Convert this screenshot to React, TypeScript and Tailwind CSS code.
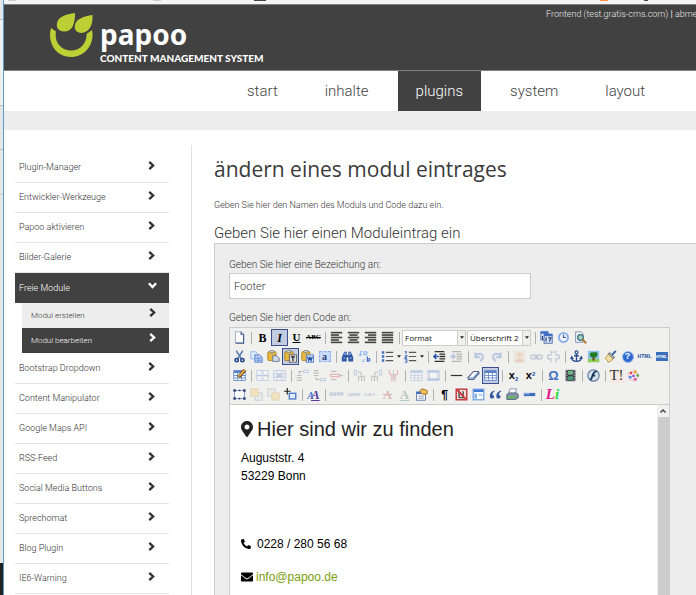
import React from "react";
import type { ReactNode } from "react";
import { FaEnvelope, FaMapMarkerAlt, FaPhoneAlt } from "react-icons/fa";

function Svg({ children }: { children: ReactNode }) {
  return (
    <svg viewBox="0 0 16 16" className="size-[13px] shrink-0" fill="none" aria-hidden="true">
      {children}
    </svg>
  );
}

const blue = "#3f6fc4";
const serif = "font-['Liberation_Serif',serif]";

const pasteBoard = (
  <>
    <rect x="1" y="2" width="10" height="11" rx="1" fill="#e9b93c" stroke="#a57a1c" />
    <rect x="3.500" y="0.500" width="5" height="3" rx="1" fill="#d8d8d8" stroke="#777" />
  </>
);

const lines = (xs: number[][]) =>
  xs.map(([x1, x2, y]) => <path key={y} d={`M${x1} ${y}H${x2}`} stroke="#444" strokeWidth="2" />);

const tableGrid = (
  <>
    <rect x="1" y="2" width="14" height="12" fill="#fff" stroke="#5b82c4" />
    <path d="M1 3.500H15" stroke="#5b82c4" strokeWidth="3" />
    <path d="M1 8H15M1 11H15M5.500 3V14M10.500 3V14" stroke="#5b82c4" />
  </>
);

const icons: Record<string, ReactNode> = {
  new: (
    <Svg>
      <path d="M3 1H10L13 4V15H3Z" fill="#fff" stroke="#8a9bb8" />
      <path d="M10 1V4H13V15H3.500" stroke="#4a5f8c" strokeWidth="1.500" />
    </Svg>
  ),
  bold: <span className={`${serif} text-xs font-bold`}>B</span>,
  italic: <span className={`${serif} text-xs font-bold italic`}>I</span>,
  underline: <span className={`${serif} text-[11px] font-bold underline`}>U</span>,
  strike: <span className={`${serif} text-[7px] font-bold line-through`}>ABC</span>,
  left: <Svg>{lines([[1, 15, 2], [1, 11, 5], [1, 15, 8], [1, 11, 11], [1, 15, 14]])}</Svg>,
  center: <Svg>{lines([[1, 15, 2], [3, 13, 5], [1, 15, 8], [3, 13, 11], [1, 15, 14]])}</Svg>,
  right: <Svg>{lines([[1, 15, 2], [5, 15, 5], [1, 15, 8], [5, 15, 11], [1, 15, 14]])}</Svg>,
  justify: <Svg>{lines([[1, 15, 2], [1, 15, 5], [1, 15, 8], [1, 15, 11], [1, 15, 14]])}</Svg>,
  date: (
    <Svg>
      <rect x="1" y="1" width="9" height="10" fill="#e8effc" stroke="#4a6fb4" />
      <rect x="5" y="4" width="10" height="11" fill="#dce8fb" stroke="#33569c" />
      <path d="M1 2H10M5 5H15" stroke="#3f6fc4" strokeWidth="3" />
      <path d="M3 6V11M7.500 8V13M10 8.500H13.500L11.500 13" stroke="#26407c" strokeWidth="1.500" />
    </Svg>
  ),
  time: (
    <Svg>
      <circle cx="8" cy="8" r="5.500" fill="#f4f8ff" stroke="#8fb0e8" strokeWidth="2.500" />
      <path d="M8 4.500V8H11" stroke="#33569c" strokeWidth="1.500" />
    </Svg>
  ),
  preview: (
    <Svg>
      <path d="M2 1H9L11 3V14H2Z" fill="#eef3fb" stroke="#6f86a8" />
      <circle cx="8" cy="8" r="3.500" fill="#9fd3c5" stroke="#3b6c78" strokeWidth="1.500" />
      <path d="M10.500 10.500L15 15" stroke="#b07a2c" strokeWidth="2.500" />
    </Svg>
  ),
  cut: (
    <Svg>
      <path d="M4 1L10.500 11M12 1L5.500 11" stroke="#5f83b4" strokeWidth="2" />
      <circle cx="4.500" cy="12.500" r="2" stroke="#23478e" strokeWidth="2" />
      <circle cx="11.500" cy="12.500" r="2" stroke="#23478e" strokeWidth="2" />
    </Svg>
  ),
  copy: (
    <Svg>
      <path d="M1 2H7L9 4V11H1Z" fill="#dbe8fc" stroke="#8fb0e8" />
      <path d="M6 6H12L15 9V15H6Z" fill="#b9d0f5" stroke="#3f6fc4" />
      <path d="M8 10H13M8 12.500H13" stroke="#3f6fc4" />
    </Svg>
  ),
  paste: (
    <Svg>
      {pasteBoard}
      <path d="M7 7H12L15 10V14H7Z" fill="#cfd8e2" stroke="#5d6f8a" />
    </Svg>
  ),
  pasteText: (
    <Svg>
      {pasteBoard}
      <rect x="6.500" y="6" width="9" height="9" fill="#ddd" stroke="#555" />
      <path d="M8.500 8.500H13.500M11 8.500V13.500" stroke="#222" strokeWidth="1.500" />
    </Svg>
  ),
  pasteWord: (
    <Svg>
      {pasteBoard}
      <rect x="6.500" y="6" width="9" height="9" fill="#eaf1fd" stroke="#3f6fc4" />
      <path d="M8 8L9.500 13L11 9L12.500 13L14 8" stroke="#2450a5" strokeWidth="1.500" />
    </Svg>
  ),
  selectAll: (
    <span className="flex h-[11px] w-3 items-center justify-center border border-dashed border-[#8fb0f0] bg-[#c9daf9] font-['Liberation_Serif',serif] text-[10px] leading-none font-bold text-[#263d74]">
      a
    </span>
  ),
  find: (
    <Svg>
      <path d="M4 2H7V6H9V2H12L15 9V14H9V9H7V14H1V9Z" fill="#2e57a4" />
      <path d="M3 10H5M11 10H13M5 3V6M11 3V6" stroke="#9dbdf0" strokeWidth="1.500" />
    </Svg>
  ),
  replace: (
    <Svg>
      <path d="M6 2H3V7M1 5L3 7.500L5 5M8 14H5M8 11L5 14" stroke="#8fb6f0" strokeWidth="1.200" />
      <circle cx="9" cy="4" r="2" stroke="#8fb6f0" strokeWidth="1.500" />
      <path d="M11.500 8V14M11.500 11C15 9 16 14 11.500 14" stroke="#3f6fc4" strokeWidth="1.500" />
    </Svg>
  ),
  bullets: (
    <Svg>
      <path d="M1 3H4M1 8H4M1 13H4" stroke={blue} strokeWidth="3" />
      <path d="M6 3H15M6 8H15M6 13H15" stroke="#555" strokeWidth="1.500" />
    </Svg>
  ),
  numbers: (
    <Svg>
      <path d="M1 2H2.500V5M1 7H3.500L1 10H4M1 12H3.500V15H1" stroke={blue} strokeWidth="1.300" />
      <path d="M6 3H15M6 8H15M6 13H15" stroke="#555" strokeWidth="1.500" />
    </Svg>
  ),
  outdent: (
    <Svg>
      <path d="M2 2H14M8 5H15M8 8H15M8 11H15M2 14H14" stroke="#333" strokeWidth="1.600" />
      <path d="M7 8H1M4 5L1 8L4 11" stroke="#2e57a4" strokeWidth="2" />
    </Svg>
  ),
  indent: (
    <Svg>
      <path d="M2 2H14M8 5H15M8 8H15M8 11H15M2 14H14" stroke="#333" strokeWidth="1.600" />
      <path d="M0 8H6M3 5L6 8L3 11" stroke="#2e57a4" strokeWidth="2" />
    </Svg>
  ),
  undo: (
    <Svg>
      <path d="M3 3V9H9M3 8C7 2 14 5 12 10L9 14" stroke={blue} strokeWidth="2.500" />
    </Svg>
  ),
  redo: (
    <Svg>
      <path d="M13 3V9H7M13 8C9 2 2 5 4 10L7 14" stroke={blue} strokeWidth="2.500" />
    </Svg>
  ),
  image: (
    <Svg>
      <rect x="1" y="1" width="14" height="14" fill="#efcfae" />
      <circle cx="8" cy="6" r="3" fill="#d79a6c" />
      <path d="M2 15C3 9 13 9 14 15Z" fill="#c98a58" />
    </Svg>
  ),
  link: (
    <Svg>
      <rect x="1" y="6" width="7" height="5" rx="2.500" stroke="#4c6797" strokeWidth="1.500" />
      <rect x="8" y="6" width="7" height="5" rx="2.500" stroke="#4c6797" strokeWidth="1.500" />
      <path d="M5 8.500H11" stroke="#4c6797" strokeWidth="1.500" />
    </Svg>
  ),
  unlink: (
    <Svg>
      <path
        d="M6 6H3C0 6 0 11 3 11H6M10 6H13C16 6 16 11 13 11H10M4 1L6 4M12 1L10 4M4 15L6 12M12 15L10 12M8 1V4"
        stroke="#4c6797"
        strokeWidth="1.500"
      />
    </Svg>
  ),
  anchor: (
    <Svg>
      <circle cx="8" cy="3" r="1.800" stroke="#2b4f8e" strokeWidth="1.500" />
      <path
        d="M8 5V14M5 7H11M2 9C2 13 5 14 8 14C11 14 14 13 14 9M1 11L2 8.500L4 11M12 11L14 8.500L15 11"
        stroke="#2b4f8e"
        strokeWidth="1.700"
      />
    </Svg>
  ),
  tree: (
    <Svg>
      <rect x="1" y="1" width="14" height="14" fill="#8fc3ee" />
      <rect x="1" y="11" width="14" height="4" fill="#8fd050" />
      <path d="M8 8V13" stroke="#6d3f18" strokeWidth="2.500" />
      <path d="M4 8C2 5 5 2 8 3C11 1 15 4 12 8C10 10 6 10 4 8Z" fill="#237c25" />
    </Svg>
  ),
  brush: (
    <Svg>
      <path d="M14.500 1L10 6" stroke="#3d62a6" strokeWidth="2.500" />
      <path d="M7 3L13 9L11 11L5 5Z" fill="#9aa5b5" stroke="#596273" />
      <path d="M5 5L11 11C9 14 7 15 5 15C4 12 2 11 1 10C3 9 4 7 5 5Z" fill="#f1dda6" stroke="#b98d30" />
    </Svg>
  ),
  help: (
    <span className="flex size-3 items-center justify-center rounded-full border border-[#9dbdf0] bg-[#2f6ad0] font-['Liberation_Sans',sans-serif] text-[9px] leading-none font-bold text-white">
      ?
    </span>
  ),
  html: <span className="font-['Liberation_Sans',sans-serif] text-[5px] font-bold text-[#2450a5]">HTML</span>,
  htmlBox: (
    <span className="flex h-[9px] w-3 items-center justify-center bg-[#3a70bb] font-['Liberation_Sans',sans-serif] text-[4px] font-bold text-white">
      HTML
    </span>
  ),
  editTable: (
    <Svg>
      {tableGrid}
      <path d="M14.500 1L7 10" stroke="#7a4d16" strokeWidth="4" />
      <path d="M14.500 1L7.500 9" stroke="#f0b64a" strokeWidth="2" />
    </Svg>
  ),
  rowProps: (
    <Svg>
      <rect x="1" y="2" width="14" height="12" fill="#fff" stroke={blue} />
      <path d="M1 8H15M8 3V6M8 10V13" stroke={blue} strokeWidth="2" />
    </Svg>
  ),
  cellProps: (
    <Svg>
      <rect x="1" y="2" width="14" height="12" fill="#fff" stroke={blue} />
      <path d="M1 6H15M1 10H15M5 2V14M11 2V14" stroke={blue} />
      <rect x="6" y="6" width="4" height="4" fill={blue} />
    </Svg>
  ),
  rowBefore: (
    <Svg>
      <path d="M1 8H7M1 11H7M1 14H7" stroke="#555" strokeWidth="1.500" />
      <path d="M4 6V3H8" stroke="#333" strokeWidth="1.300" />
      <rect x="9.500" y="1.500" width="6" height="3" stroke={blue} />
    </Svg>
  ),
  rowAfter: (
    <Svg>
      <path d="M1 2H7M1 5H7M1 8H7" stroke="#555" strokeWidth="1.500" />
      <path d="M4 10V13H8" stroke="#333" strokeWidth="1.300" />
      <rect x="9.500" y="11.500" width="6" height="3" stroke={blue} />
    </Svg>
  ),
  rowDelete: (
    <Svg>
      <path d="M1 3H8M1 13H8" stroke="#555" strokeWidth="1.500" />
      <path d="M1 6.500H12V9.500H1Z" stroke="#d23b3b" strokeWidth="1.600" />
      <path d="M11 8H16" stroke="#333" />
    </Svg>
  ),
  colBefore: (
    <Svg>
      <path d="M7 9V15M10.500 9V15M14 9V15M7 9H14" stroke="#555" strokeWidth="1.300" />
      <rect x="1.500" y="1.500" width="3" height="6" stroke={blue} />
      <path d="M6 4H10V8" stroke="#333" />
    </Svg>
  ),
  colAfter: (
    <Svg>
      <path d="M2 9V15M5.500 9V15M9 9V15M2 9H9" stroke="#555" strokeWidth="1.300" />
      <rect x="11.500" y="1.500" width="3" height="6" stroke={blue} />
      <path d="M10 4H6V8" stroke="#333" />
    </Svg>
  ),
  colDelete: (
    <Svg>
      <path d="M3 1V6L6 8V15M13 1V6L10 8V15" stroke="#d23b3b" strokeWidth="1.600" />
      <path d="M8 1V13M5 7H11" stroke="#555" />
    </Svg>
  ),
  grid: <Svg>{tableGrid}</Svg>,
  merge: (
    <Svg>
      <rect x="1" y="2" width="14" height="12" fill="#fff" stroke={blue} />
      <path d="M1 3.500H15M1 12.500H15" stroke={blue} strokeWidth="2.500" />
      <path d="M3 5V12M13 5V12" stroke={blue} />
    </Svg>
  ),
  rule: (
    <Svg>
      <path d="M1 8H15" stroke="#333" strokeWidth="1.500" />
    </Svg>
  ),
  eraser: (
    <Svg>
      <path d="M1 11L8 3H14L15 5L8 13H2Z" fill="#fff" stroke="#4c5d86" strokeWidth="1.300" />
      <path d="M2 11H8L14 4" stroke="#4c76c4" strokeWidth="1.300" />
    </Svg>
  ),
  sub: (
    <span className="font-['Liberation_Sans',sans-serif] text-[11px] leading-none font-bold">
      x<sub className="text-[6px] text-[#2450a5]">2</sub>
    </span>
  ),
  sup: (
    <span className="font-['Liberation_Sans',sans-serif] text-[11px] leading-none font-bold">
      x<sup className="text-[6px] text-[#2450a5]">2</sup>
    </span>
  ),
  omega: <span className="font-['Liberation_Sans',sans-serif] text-[13px] font-bold text-[#416fc4]">Ω</span>,
  film: (
    <Svg>
      <rect x="2" y="1" width="12" height="14" fill="#333b42" />
      <rect x="5" y="2" width="6" height="5" fill="#72b789" />
      <rect x="5" y="9" width="6" height="5" fill="#4e9b78" />
      <path d="M3.500 1V15M12.500 1V15" stroke="#fff" strokeDasharray="1.500 1.500" />
    </Svg>
  ),
  flash: (
    <Svg>
      <circle cx="8" cy="8" r="7" fill="#d5dfeb" stroke="#6682a3" strokeWidth="1.500" />
      <path d="M12 3C8 3 7 7 6.500 9C6 11 5 13 3.500 13M6 8H10" stroke="#19375f" strokeWidth="2.200" />
    </Svg>
  ),
  type: (
    <span className="flex h-[14px] w-4 items-center justify-center bg-[#f6e9e4] font-['Liberation_Serif',serif] text-[15px] leading-none text-[#333]">
      T!
    </span>
  ),
  palette: (
    <Svg>
      <path d="M1 5L10 1L15 8L11 15L3 13Z" fill="#f9edf0" stroke="#e0b3ba" />
      <circle cx="5" cy="5" r="1.700" fill="#e5484d" />
      <circle cx="10" cy="4" r="1.700" fill="#f0a22e" />
      <circle cx="13" cy="8" r="1.700" fill="#62b34a" />
      <circle cx="8" cy="8.500" r="1.700" fill="#8d52c7" />
      <circle cx="4" cy="10" r="1.700" fill="#3f8be0" />
      <circle cx="10" cy="12.500" r="1.700" fill="#e04f9d" />
    </Svg>
  ),
  layer: (
    <Svg>
      <rect x="2" y="3" width="12" height="10" fill="#fff" stroke="#6b8fd0" />
      <path
        d="M0.500 1.500H3.500V4.500H0.500ZM12.500 1.500H15.500V4.500H12.500ZM0.500 11.500H3.500V14.500H0.500ZM12.500 11.500H15.500V14.500H12.500ZM7 2H9V4H7ZM7 12H9V14H7Z"
        fill="#2c3f6e"
      />
    </Svg>
  ),
  forward: (
    <Svg>
      <rect x="6" y="6" width="9" height="9" fill="#d6dae0" stroke="#6d7787" />
      <rect x="1" y="1" width="9" height="9" fill="#efc75a" stroke="#b98d30" />
    </Svg>
  ),
  backward: (
    <Svg>
      <rect x="1" y="1" width="9" height="9" fill="#d6dae0" stroke="#6d7787" />
      <rect x="6" y="6" width="9" height="9" fill="#efc75a" stroke="#b98d30" />
    </Svg>
  ),
  absolute: (
    <Svg>
      <path d="M4 0V8M0 4H8" stroke="#222" strokeWidth="1.500" />
      <rect x="6.500" y="6.500" width="8" height="7" fill="#e3edfd" stroke="#3f6fc4" strokeWidth="1.500" />
    </Svg>
  ),
  styles: (
    <span className={`${serif} flex items-baseline leading-none font-bold italic`}>
      <span className="-mr-[3px] text-[10px] text-[#3f7bd4]">A</span>
      <span className="text-[13px] text-[#5b3aa0] underline">A</span>
    </span>
  ),
  cite: <span className={`${serif} text-[7px] font-bold text-[#2450a5]`}>6699</span>,
  abbr: <span className={`${serif} text-[5px] font-bold text-[#2450a5]`}>ABBR</span>,
  acronym: <span className={`${serif} text-[5px] font-bold text-[#2450a5]`}>A.B.C.</span>,
  del: <span className={`${serif} text-[13px] font-bold text-[#b2383c] line-through`}>A</span>,
  ins: <span className={`${serif} text-[13px] font-bold text-[#2f6d4b] underline`}>A</span>,
  attribs: (
    <Svg>
      <rect x="2" y="5" width="11" height="10" fill="#fff" stroke="#4a6aa0" />
      <path d="M2 6H13" stroke="#3f6fc4" strokeWidth="3" />
      <path d="M4 10H11M4 12.500H11" stroke="#7b8aa8" />
      <path d="M6 3L9 1L15 3V7L11 8L7 6Z" fill="#f0bd56" stroke="#9c6b1d" />
    </Svg>
  ),
  pilcrow: <span className="font-['Liberation_Sans',sans-serif] text-xs font-bold">¶</span>,
  nbsp: (
    <Svg>
      <rect x="1.500" y="1.500" width="13" height="13" fill="#f6dfe0" stroke="#c33b3f" strokeWidth="1.800" />
      <path d="M5 12V4L10 11V4M11 12H5" stroke="#333" strokeWidth="1.500" />
      <path d="M2 2L14 14" stroke="#d6383d" strokeWidth="1.800" />
    </Svg>
  ),
  template: (
    <Svg>
      <rect x="1.500" y="1.500" width="13" height="13" fill="#fff" stroke="#6b9be0" strokeWidth="1.500" />
      <path d="M2 3.500H14" stroke="#3f7bd4" strokeWidth="3" />
      <rect x="3" y="7" width="3" height="6" fill="#7daae8" />
      <rect x="8" y="7" width="5" height="3" fill="#bcd5f7" />
    </Svg>
  ),
  quote: (
    <Svg>
      <path
        d="M7 3C3 4 1 6 1 10C1 12 2 13 4 13C7 13 7 9 4.500 9C4 7 5 5 7 4ZM15 3C11 4 9 6 9 10C9 12 10 13 12 13C15 13 15 9 12.500 9C12 7 13 5 15 4Z"
        fill="#33569c"
      />
    </Svg>
  ),
  print: (
    <Svg>
      <path d="M5 1H13L11 7H3Z" fill="#fff" stroke="#6f86a8" />
      <path d="M1 8L4 6H13L15 8V12L12 14H1Z" fill="#8493a8" stroke="#45556e" />
      <path d="M2 11.500H12" stroke="#5ac34b" strokeWidth="2" />
    </Svg>
  ),
  pageBreak: (
    <Svg>
      <rect x="1" y="6" width="14" height="4" fill="#3d6dbd" />
      <path d="M1 7H8" stroke="#8db2ee" strokeWidth="1.500" />
    </Svg>
  ),
  lorem: (
    <span className={`${serif} text-[15px] leading-none font-bold italic`}>
      <span className="text-[#e2148c]">L</span>
      <span className="text-[#28e040]">i</span>
    </span>
  ),
};

// "|" draws a separator, "*" marks a pressed button, "-" a disabled one, "+" adds a menu arrow.
const firstRow = "new | bold *italic underline strike | left center right justify |".split(" ");
const firstRowEnd = "| date time preview".split(" ");
const rows: string[][] = [
  "cut copy paste *pasteText pasteWord selectAll | find replace | +bullets +numbers | outdent -indent | -undo -redo | -image -link -unlink | anchor tree brush help html htmlBox",
  "editTable | -rowProps -cellProps | -rowBefore -rowAfter -rowDelete | -colBefore -colAfter -colDelete | -grid -merge | rule eraser *grid | sub sup | omega film | flash | type palette",
  "layer -forward -backward absolute | styles | -cite -abbr -acronym -del -ins attribs | pilcrow nbsp template quote print pageBreak | lorem",
].map((r) => r.split(" "));

function Tools({ items }: { items: string[] }) {
  return (
    <>
      {items.map((item, i) => {
        if (item === "|") return <span key={i} className="mr-[2px] ml-[3px] h-3 w-px shrink-0 bg-[#b0b0b0]" />;
        const mark = "*-+".includes(item[0]) ? item[0] : "";
        const name = mark ? item.slice(1) : item;
        return (
          <React.Fragment key={i}>
            <button
              type="button"
              aria-label={name}
              disabled={mark === "-"}
              className={`flex h-[17px] w-[17px] shrink-0 items-center justify-center overflow-hidden border leading-none ${
                mark === "*" ? "border-[#3a4f8c] bg-[#c2cbe0]" : "border-transparent"
              } ${mark === "-" ? "opacity-30" : ""}`}
            >
              {icons[name]}
            </button>
            {mark === "+" && (
              <svg viewBox="0 0 6 4" className="mx-px h-[3px] w-1 shrink-0" aria-hidden="true">
                <path d="M0 0H6L3 4Z" fill="#222" />
              </svg>
            )}
          </React.Fragment>
        );
      })}
    </>
  );
}

function ToolSelect({ label }: { label: string }) {
  return (
    <span className="mr-px flex h-4 w-16 shrink-0 border border-[#ccc] bg-white">
      <select
        aria-label={label}
        className="min-w-0 flex-1 appearance-none pl-[2px] font-['Open_Sans',sans-serif] text-[8px] leading-none font-normal text-[#111] outline-none"
      >
        <option>{label}</option>
      </select>
      <span className="flex w-2 items-center justify-center border-l border-[#ccc] bg-[#efefed]">
        <svg viewBox="0 0 6 4" className="h-[3px] w-1" aria-hidden="true">
          <path d="M0 0H6L3 4Z" fill="#222" />
        </svg>
      </span>
    </span>
  );
}

function Chevron({ down = false }: { down?: boolean }) {
  return (
    <svg viewBox="0 0 10 10" className={`mb-[6px] size-[9px] ${down ? "rotate-90" : ""}`} aria-hidden="true">
      <path d="M2.500 1L6.800 5L2.500 9" fill="none" stroke="currentColor" strokeWidth="2.600" />
    </svg>
  );
}

function SideLink({ label }: { label: string }) {
  return (
    <li className="border-b border-[#e4e4e4]">
      <a href="#" className="flex h-[29px] items-center justify-between pt-px pr-[13px] pl-1 text-[#333]">
        {label}
        <Chevron />
      </a>
    </li>
  );
}

const navItems = ["start", "inhalte", "plugins", "system", "layout"];

export default function App() {
  return (
    <div className="flex h-screen overflow-hidden bg-white font-['Roboto',sans-serif] font-light text-[#333]">
      <div className="flex w-[3px] shrink-0 flex-col bg-[#e6e6e6]">
        <div className="h-5 border-b border-[#bbb]" />
        <div className="h-[86px] border-b border-[#bbb] bg-[#f0f0f0]" />
        <div className="h-11 border-b border-[#bbb]" />
        <div className="h-[45px] border-b border-[#ccc]" />
        <div className="flex-1" />
        <div className="h-8 bg-[#222]" />
      </div>
      <div className="flex min-w-0 flex-1 flex-col border-l border-[#5b9bc8]">
        <div className="flex h-1 shrink-0 items-start bg-[#f4f4f4]">
          <span className="ml-1 h-px w-2 bg-[#ccc]" />
          <span className="ml-[137px] h-px w-2 bg-[#ccc]" />
          <span className="ml-[93px] h-px w-3 bg-[#444]" />
          <span className="ml-[334px] h-px w-2 bg-[#ff8a45]" />
          <span className="ml-9 h-px w-1 bg-[#444]" />
        </div>
        <header className="flex h-[67px] shrink-0 justify-between overflow-hidden border-y border-[#808080] bg-[#414141]">
          <a href="#" className="ml-[45px] flex text-white">
            <svg viewBox="0 0 44 46" className="mt-2 h-[46px] w-11 shrink-0" fill="#bccf34" aria-hidden="true">
              <path d="M26 0C26 10 24 18 16 18.500C10 19 7 15 8 10C9 4 17 1 26 0Z" />
              <path d="M43.500 2C44 11 41 19 33 20C27 20 25 16 26 12C27 6 35 3 43.500 2Z" />
              <path d="M2 15L7 18.500C5 29 12 37.500 22 37.500C32 37.500 38 29 37.500 21L43 17C46 31 36 44 22 44C7 44 -2 30 2 15Z" />
            </svg>
            <span className="mt-[15px] ml-[7px] flex flex-col">
              <span className="font-['Noto_Sans',sans-serif] text-[28px] leading-7 font-bold">papoo</span>
              <span className="mt-1 font-['Lato',sans-serif] text-[10px] leading-3 font-black">
                CONTENT MANAGEMENT SYSTEM
              </span>
            </span>
          </a>
          <p className="w-[150px] overflow-hidden pt-[3px] text-[9px] leading-3 whitespace-nowrap text-[#e8e8e8]">
            <a href="#">Frontend (test.gratis-cms.com)</a> <b>|</b> <a href="#">abmelden</a>
          </p>
        </header>
        <nav className="flex h-10 shrink-0 gap-[11px] pl-[225px] text-[15px]">
          {navItems.map((n) => (
            <a
              key={n}
              href="#"
              className={`flex items-center px-[18px] ${n === "plugins" ? "bg-[#414141] text-white" : "text-[#444]"}`}
            >
              {n}
            </a>
          ))}
        </nav>
        <div className="h-[19px] shrink-0 bg-[#ededed]" />
        <div className="flex min-h-0 flex-1 pt-[15px]">
          <aside className="w-[188px] shrink-0 border-r border-[#e0e0e0] pt-2 pr-[22px] pl-[11px] text-[9px]">
            <ul>
              {["Plugin-Manager", "Entwickler-Werkzeuge", "Papoo aktivieren", "Bilder-Galerie"].map((l) => (
                <SideLink key={l} label={l} />
              ))}
              <li className="mb-px">
                <a
                  href="#"
                  className="flex h-[30px] items-center justify-between bg-[#414141] pt-px pr-3 pl-1 text-white"
                >
                  Freie Module
                  <Chevron down />
                </a>
                <ul className="ml-[7px] text-[8px]">
                  <li>
                    <a href="#" className="flex h-[25px] items-center justify-between bg-[#ededed] pr-3 pl-[9px]">
                      Modul erstellen
                      <Chevron />
                    </a>
                  </li>
                  <li>
                    <a
                      href="#"
                      className="flex h-[25px] items-center justify-between bg-[#414141] pr-3 pl-[9px] text-white"
                    >
                      Modul bearbeiten
                      <Chevron />
                    </a>
                  </li>
                </ul>
              </li>
              {[
                "Bootstrap Dropdown",
                "Content Manipulator",
                "Google Maps API",
                "RSS-Feed",
                "Social Media Buttons",
                "Sprechomat",
                "Blog Plugin",
                "IE6-Warning",
              ].map((l) => (
                <SideLink key={l} label={l} />
              ))}
            </ul>
          </aside>
          <main className="flex min-w-0 flex-1 flex-col pl-[22px]">
            <h1 className="pt-2 font-['Open_Sans',sans-serif] text-[21px] leading-8 font-normal text-[#3a3a3a]">
              ändern eines modul eintrages
            </h1>
            <p className="mt-[14px] text-[9px] leading-3">Geben Sie hier den Namen des Moduls und Code dazu ein.</p>
            <h2 className="mt-3 text-[15px] leading-5">Geben Sie hier einen Moduleintrag ein</h2>
            <form className="flex min-h-0 flex-1 flex-col border-t border-l border-[#ccc] bg-[#ededed] pt-[13px] pl-[14px] text-[10px] leading-4">
              <label htmlFor="bezeichnung">Geben Sie hier eine Bezeichung an:</label>
              <input
                id="bezeichnung"
                type="text"
                defaultValue="Footer"
                className="h-[26px] w-[302px] shrink-0 border border-[#ccc] bg-white px-1 text-[11px] text-[#333] outline-none"
              />
              <span className="mt-[11px]">Geben Sie hier den Code an:</span>
              <div className="mt-px flex min-h-0 w-[441px] flex-1 flex-col border border-b-0 border-[#ccc] bg-white">
                <div
                  role="toolbar"
                  aria-label="Editor"
                  className="shrink-0 border-b border-[#ccc] bg-[#f0f0ee] pl-px text-black"
                >
                  <div className="flex h-[19px] items-center">
                    <Tools items={firstRow} />
                    <ToolSelect label="Format" />
                    <ToolSelect label="Überschrift 2" />
                    <Tools items={firstRowEnd} />
                  </div>
                  {rows.map((r, i) => (
                    <div key={i} className="flex h-[19px] items-center">
                      <Tools items={r} />
                    </div>
                  ))}
                </div>
                <div className="flex min-h-0 flex-1">
                  <article className="flex-1 pt-2 pl-[11px] font-['Liberation_Sans',sans-serif] text-xs leading-[18px] font-normal text-black">
                    <h2 className="flex items-center gap-1 text-xl leading-8 text-[#222]">
                      <FaMapMarkerAlt className="h-4 w-3" />
                      Hier sind wir zu finden
                    </h2>
                    <p className="mt-1">
                      Auguststr. 4<br />
                      53229 Bonn
                    </p>
                    <p className="mt-[50px] flex items-center gap-[6px]">
                      <FaPhoneAlt className="size-[10px]" />
                      0228 / 280 56 68
                    </p>
                    <p className="mt-[15px] flex items-center gap-[3px]">
                      <FaEnvelope className="size-3" />
                      <a href="#" className="text-[#7a9e0f]">
                        info@papoo.de
                      </a>
                    </p>
                  </article>
                  <div className="flex w-3 flex-col items-center bg-[#f0f0f0]">
                    <svg viewBox="0 0 12 12" className="size-3 shrink-0" aria-hidden="true">
                      <path d="M3.500 7.500L6 5L8.500 7.500" fill="none" stroke="#444" strokeWidth="1.500" />
                    </svg>
                    <div className="w-[11px] flex-1 bg-[#cdcdcd]" />
                  </div>
                </div>
              </div>
            </form>
          </main>
        </div>
      </div>
    </div>
  );
}
